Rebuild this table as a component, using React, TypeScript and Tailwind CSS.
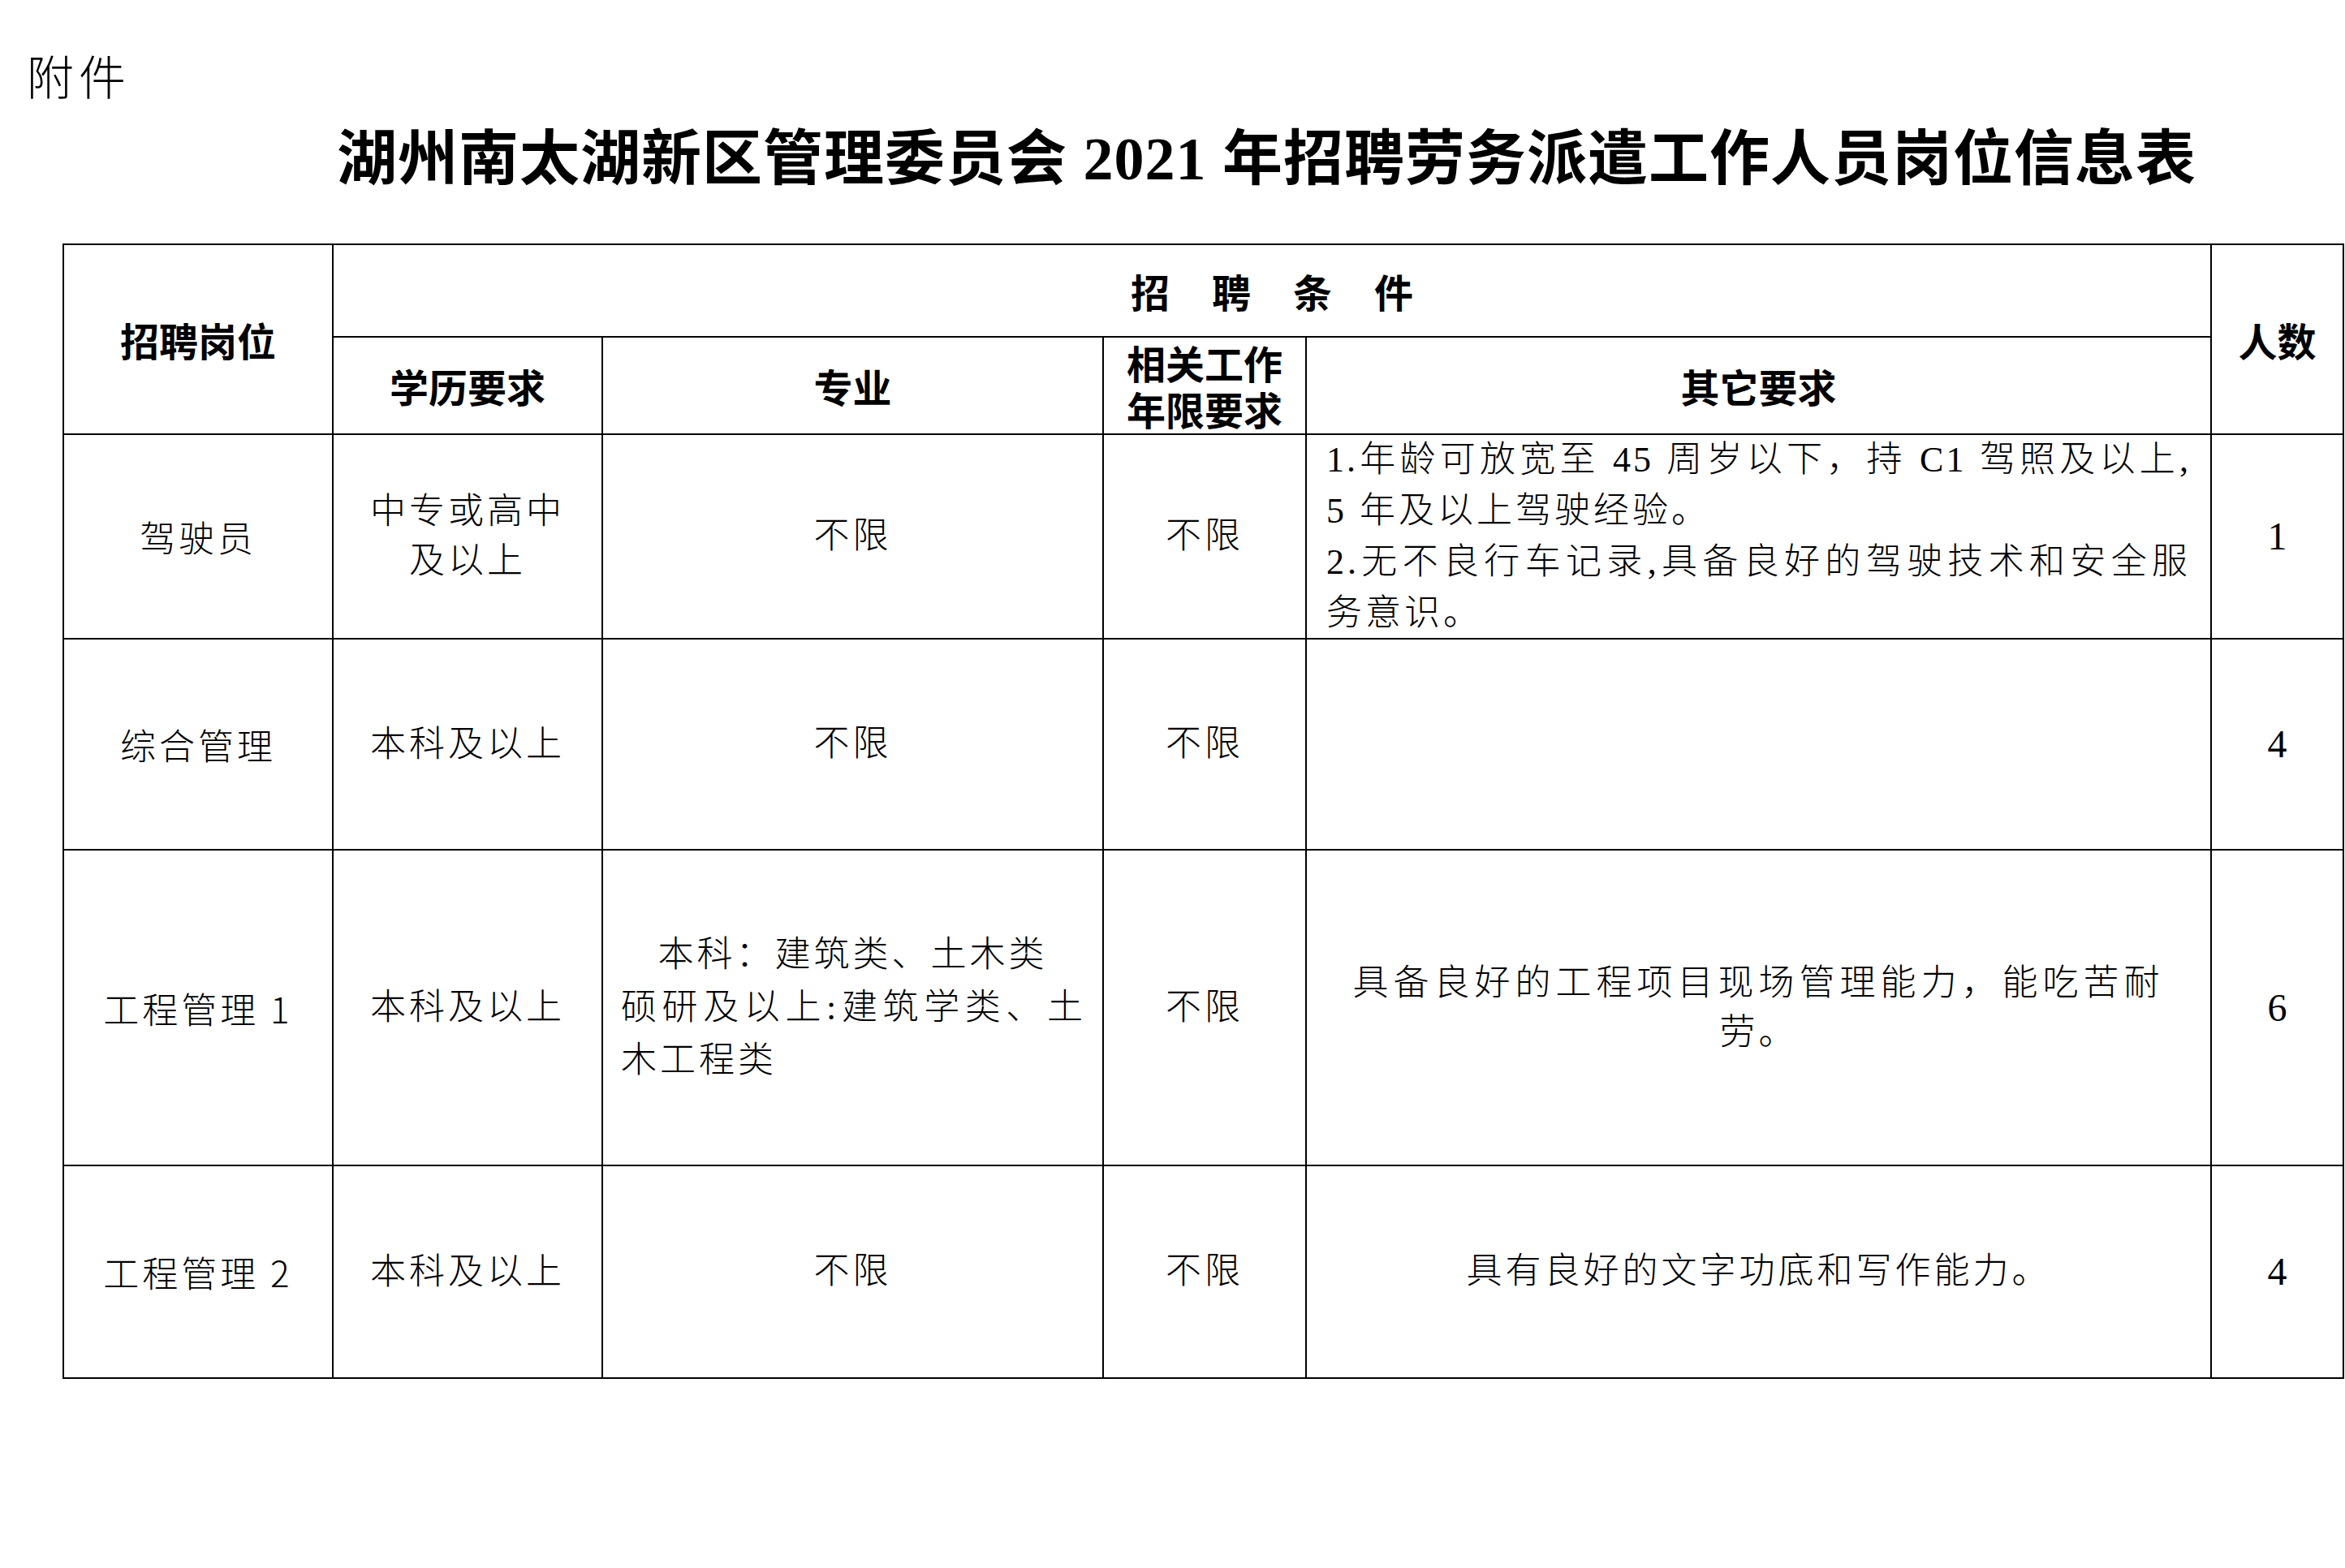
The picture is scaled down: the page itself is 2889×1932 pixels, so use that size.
import clsx from "clsx";

const rows = [
  { post: "驾驶员", edu: ["中专或高中", "及以上"], major: "不限", years: "不限", count: "1" },
  { post: "综合管理", edu: ["本科及以上"], major: "不限", years: "不限", count: "4" },
  { post: "工程管理 1", edu: ["本科及以上"], major: null, years: "不限", count: "6" },
  { post: "工程管理 2", edu: ["本科及以上"], major: "不限", years: "不限", count: "4" },
];

const Cell = ({ className, children }: { className?: string; children?: React.ReactNode }) => (
  <div className={clsx("flex items-center justify-center bg-white text-center", className)}>{children}</div>
);

const Head = ({ className, children }: { className?: string; children?: React.ReactNode }) => (
  <Cell className={clsx("font-['Noto_Sans_CJK_SC',sans-serif] text-[48px] font-bold leading-[57px] text-black", className)}>
    {children}
  </Cell>
);

const bodyText = "font-['Liberation_Serif','Noto_Sans_CJK_SC',serif] font-light text-[44px] tracking-[4px] text-black";

const Other = ({ index }: { index: number }) => {
  if (index === 0) {
    return (
      <Cell className="items-stretch justify-center px-[24px]">
        <div className={clsx("flex w-full flex-col justify-center text-left leading-[63px]", bodyText)}>
          <div className="whitespace-nowrap tracking-[3px] [text-align-last:justify]">
            1.年龄可放宽至 45 周岁以下，持 C1 驾照及以上,
          </div>
          <div className="whitespace-nowrap">5 年及以上驾驶经验。</div>
          <div className="whitespace-nowrap [text-align-last:justify]">
            2.无不良行车记录,具备良好的驾驶技术和安全服
          </div>
          <div className="whitespace-nowrap">务意识。</div>
        </div>
      </Cell>
    );
  }
  if (index === 2) {
    return (
      <Cell className={clsx("flex-col leading-[61px]", bodyText)}>
        <div className="whitespace-nowrap tracking-[6px]">具备良好的工程项目现场管理能力，能吃苦耐</div>
        <div>劳。</div>
      </Cell>
    );
  }
  if (index === 3) {
    return <Cell className={bodyText}>具有良好的文字功底和写作能力。</Cell>;
  }
  return <Cell />;
};

const App = () => {
  return (
    <div className="h-[1932px] w-[2889px] overflow-hidden bg-white text-black">
      <div className="pl-[33px] pt-[56px] font-['Noto_Sans_CJK_SC',sans-serif] text-[58px] font-light leading-[72px] tracking-[6px]">
        附件
      </div>
      <h1 className="mt-[24px] whitespace-nowrap pl-[415px] font-['Liberation_Serif','Noto_Sans_CJK_SC',serif] text-[74px] font-bold leading-[88px] tracking-[1px]">
        湖州南太湖新区管理委员会 2021 年招聘劳务派遣工作人员岗位信息表
      </h1>

      <div className="ml-[77px] mt-[60px] grid w-[2811px] grid-cols-[330px_330px_615px_248px_1113px_161px] grid-rows-[112px_118px_250px_258px_387px_260px] gap-[2px] border-2 border-black bg-black">
        <Head className="row-span-2">招聘岗位</Head>
        <Head className="col-span-4 pl-[52px] tracking-[52px]">招聘条件</Head>
        <Head className="row-span-2">人数</Head>
        <Head>学历要求</Head>
        <Head>专业</Head>
        <Head className="flex-col">
          <span>相关工作</span>
          <span>年限要求</span>
        </Head>
        <Head>其它要求</Head>

        {rows.map((row, i) => (
          <div key={row.post} className="contents">
            <Cell className="font-['Noto_Sans_CJK_SC',sans-serif] text-[44px] font-light tracking-[4px]">{row.post}</Cell>
            <Cell className={clsx("flex-col leading-[61px]", bodyText)}>
              {row.edu.map((line) => (
                <div key={line}>{line}</div>
              ))}
            </Cell>
            {row.major ? (
              <Cell className={bodyText}>{row.major}</Cell>
            ) : (
              <Cell className="items-stretch px-[22px]">
                <div className={clsx("flex w-full flex-col justify-center leading-[65px]", bodyText)}>
                  <div className="whitespace-nowrap text-center">本科：建筑类、土木类</div>
                  <div className="whitespace-nowrap tracking-[2px] [text-align-last:justify]">硕研及以上:建筑学类、土</div>
                  <div className="whitespace-nowrap text-left">木工程类</div>
                </div>
              </Cell>
            )}
            <Cell className={bodyText}>{row.years}</Cell>
            <Other index={i} />
            <Cell className="font-['Liberation_Serif',serif] text-[48px]">{row.count}</Cell>
          </div>
        ))}
      </div>
    </div>
  );
};

export default App;
